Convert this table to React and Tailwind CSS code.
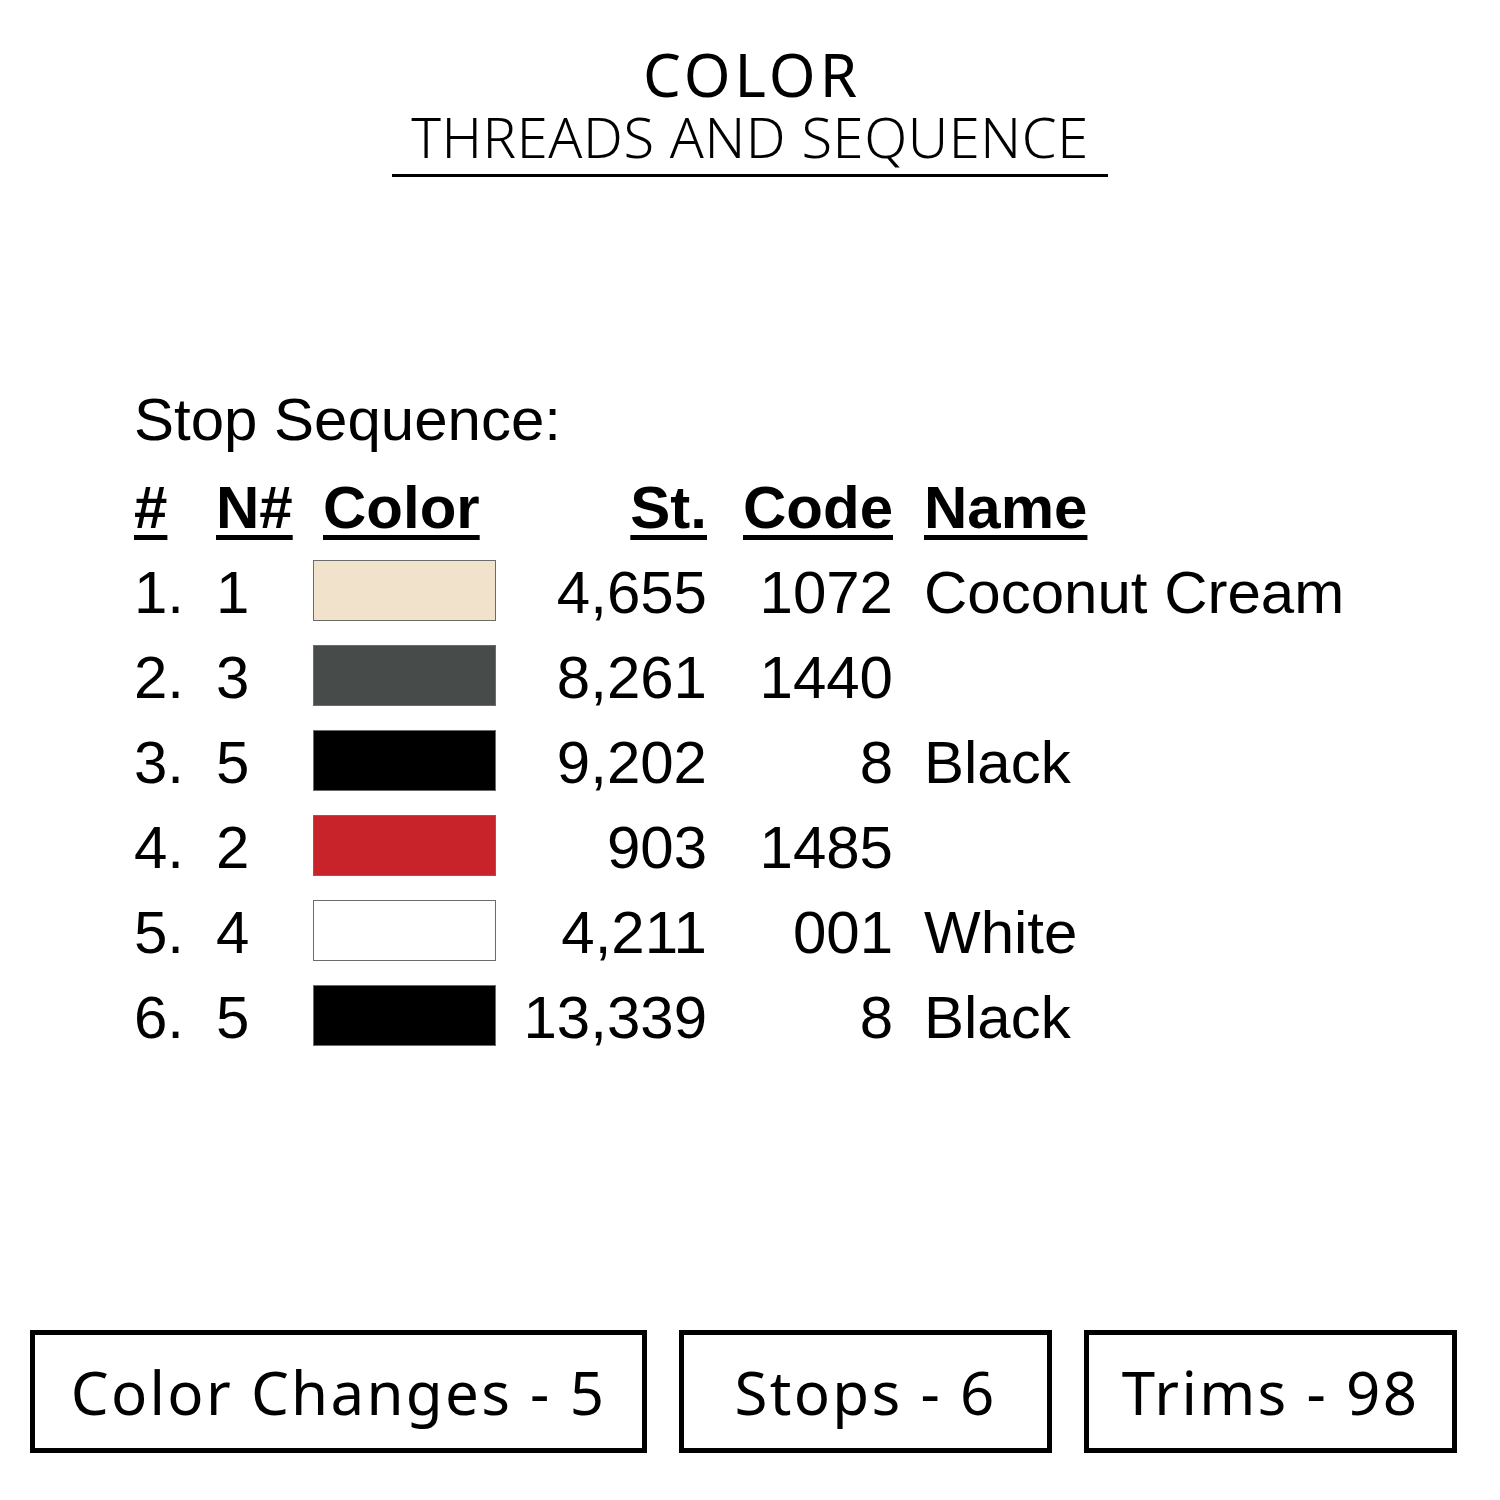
import React from 'react'

const rows = [
  { n: '1.', nn: '1', color: 'bg-[#f1e3cb]', st: '4,655', code: '1072', name: 'Coconut Cream' },
  { n: '2.', nn: '3', color: 'bg-[#474b4a]', st: '8,261', code: '1440', name: '' },
  { n: '3.', nn: '5', color: 'bg-black', st: '9,202', code: '8', name: 'Black' },
  { n: '4.', nn: '2', color: 'bg-[#c8232b]', st: '903', code: '1485', name: '' },
  { n: '5.', nn: '4', color: 'bg-white', st: '4,211', code: '001', name: 'White' },
  { n: '6.', nn: '5', color: 'bg-black', st: '13,339', code: '8', name: 'Black' },
]

const cols = 'grid grid-cols-[82px_97px_200px_194px_186px_1fr] items-center'
const ul = 'underline decoration-[5px] underline-offset-[7px]'

export default function App() {
  return (
    <div className="w-[1500px] h-[1500px] bg-white text-black flex flex-col">
      {/* Title */}
      <div className="flex flex-col items-center pt-[50px] font-['Noto_Sans',sans-serif]">
        <h1 className="text-[60px] leading-[48px] font-normal tracking-[4px] pl-[4px]">COLOR</h1>
        <div className="mt-[14px] text-[56px] leading-[48px] font-light tracking-[0.6px] px-[19px] border-b-[3px] border-black pb-[14px]">
          THREADS AND SEQUENCE
        </div>
      </div>

      {/* Stop sequence table */}
      <div className="pl-[134px] pt-[208px] font-['Liberation_Sans',Arial,sans-serif] text-[60px]">
        <div className="leading-[70px]">Stop Sequence:</div>
        <div className={`${cols} h-[85px] mt-[8px] font-bold`}>
          <span className={ul}>#</span>
          <span className={ul}>N#</span>
          <span className={`${ul} pl-[10px]`}>Color</span>
          <span className="text-right"><span className={ul}>St.</span></span>
          <span className="text-right"><span className={ul}>Code</span></span>
          <span className="pl-[31px]"><span className={ul}>Name</span></span>
        </div>
        {rows.map((r, i) => (
          <div key={i} className={`${cols} h-[85px]`}>
            <span>{r.n}</span>
            <span>{r.nn}</span>
            <span className={`block w-[183px] h-[61px] -mt-[6px] border-[1.5px] border-[#6b6b6b] ${r.color}`} />
            <span className="text-right">{r.st}</span>
            <span className="text-right">{r.code}</span>
            <span className="pl-[31px] whitespace-nowrap">{r.name}</span>
          </div>
        ))}
      </div>

      {/* Summary boxes */}
      <div className="mt-auto mb-[47px] flex px-[30px] gap-[32px] font-['Noto_Sans',sans-serif] text-[60px] tracking-[2.3px]">
        <div className="w-[617px] h-[123px] border-[5px] border-black flex items-center justify-center">Color Changes - 5</div>
        <div className="w-[373px] h-[123px] border-[5px] border-black flex items-center justify-center">Stops - 6</div>
        <div className="w-[373px] h-[123px] border-[5px] border-black flex items-center justify-center">Trims - 98</div>
      </div>
    </div>
  )
}
